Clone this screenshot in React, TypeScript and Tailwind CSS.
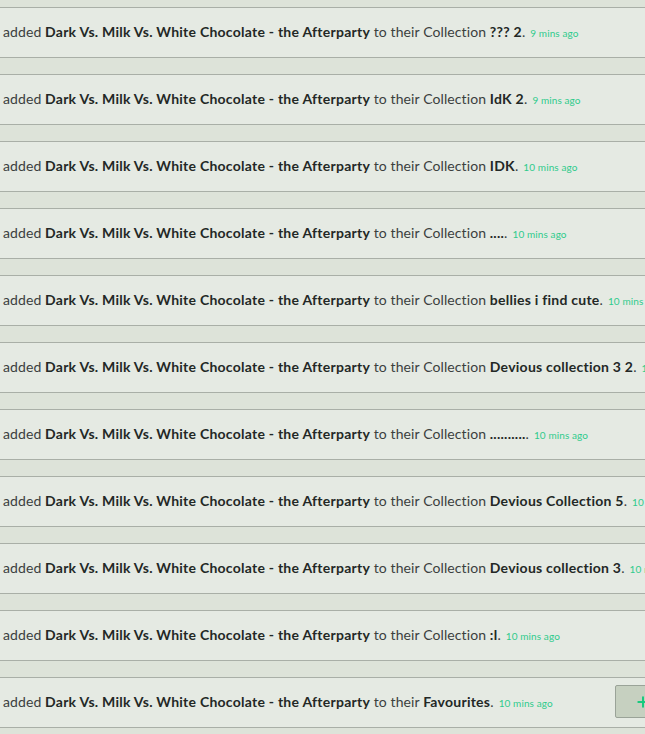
import { Plus } from 'lucide-react';

interface FeedItem {
  target: string;
  collection?: string;
  time: string;
}

const SONG = 'Dark Vs. Milk Vs. White Chocolate - the Afterparty';

const ITEMS: FeedItem[] = [
  { target: 'Collection', collection: '??? 2', time: '9 mins ago' },
  { target: 'Collection', collection: 'IdK 2', time: '9 mins ago' },
  { target: 'Collection', collection: 'IDK', time: '10 mins ago' },
  { target: 'Collection', collection: '....', time: '10 mins ago' },
  { target: 'Collection', collection: 'bellies i find cute', time: '10 mins ago' },
  { target: 'Collection', collection: 'Devious collection 3 2', time: '10 mins ago' },
  { target: 'Collection', collection: '..........', time: '10 mins ago' },
  { target: 'Collection', collection: 'Devious Collection 5', time: '10 mins ago' },
  { target: 'Collection', collection: 'Devious collection 3', time: '10 mins ago' },
  { target: 'Collection', collection: ':l', time: '10 mins ago' },
  { target: 'Favourites', time: '10 mins ago' },
];

function FeedRow({ item, last }: { item: FeedItem; last: boolean }) {
  return (
    <div className="flex items-center h-[51px] pb-[2px] bg-[#e5eae3] border-y border-[#a9afa7] pl-[3px] whitespace-nowrap">
      <span className="text-[14px] tracking-[0.1px] text-[#3b403e]">
        added <b className="font-bold tracking-[0.25px] text-[#232826]">{SONG}</b> to their{' '}
        {item.collection ? (
          <>
            Collection <b className="font-bold tracking-[0.25px] text-[#232826]">{item.collection}</b>.
          </>
        ) : (
          <>
            <b className="font-bold tracking-[0.25px] text-[#232826]">Favourites</b>.
          </>
        )}
        <span className="ml-[5px] text-[10px] tracking-[0.1px] text-[#2fcb8c]">{item.time}</span>
      </span>
      {last && (
        <button
          type="button"
          className="ml-auto mr-[19px] w-[56px] h-[33px] flex items-center justify-center bg-[#c6d0c0] border border-[#9aa398] rounded-[2px]"
        >
          <Plus className="w-4 h-4 text-[#19c97e]" strokeWidth={3} />
        </button>
      )}
    </div>
  );
}

export default function App() {
  return (
    <div
      className="w-[645px] h-[734px] overflow-hidden bg-[#dde3d9]"
      style={{ fontFamily: 'Lato, "Open Sans", sans-serif' }}
    >
      <div className="w-[690px] pt-[7px] flex flex-col gap-[16px]">
        {ITEMS.map((item, i) => (
          <FeedRow key={i} item={item} last={i === ITEMS.length - 1} />
        ))}
      </div>
    </div>
  );
}
